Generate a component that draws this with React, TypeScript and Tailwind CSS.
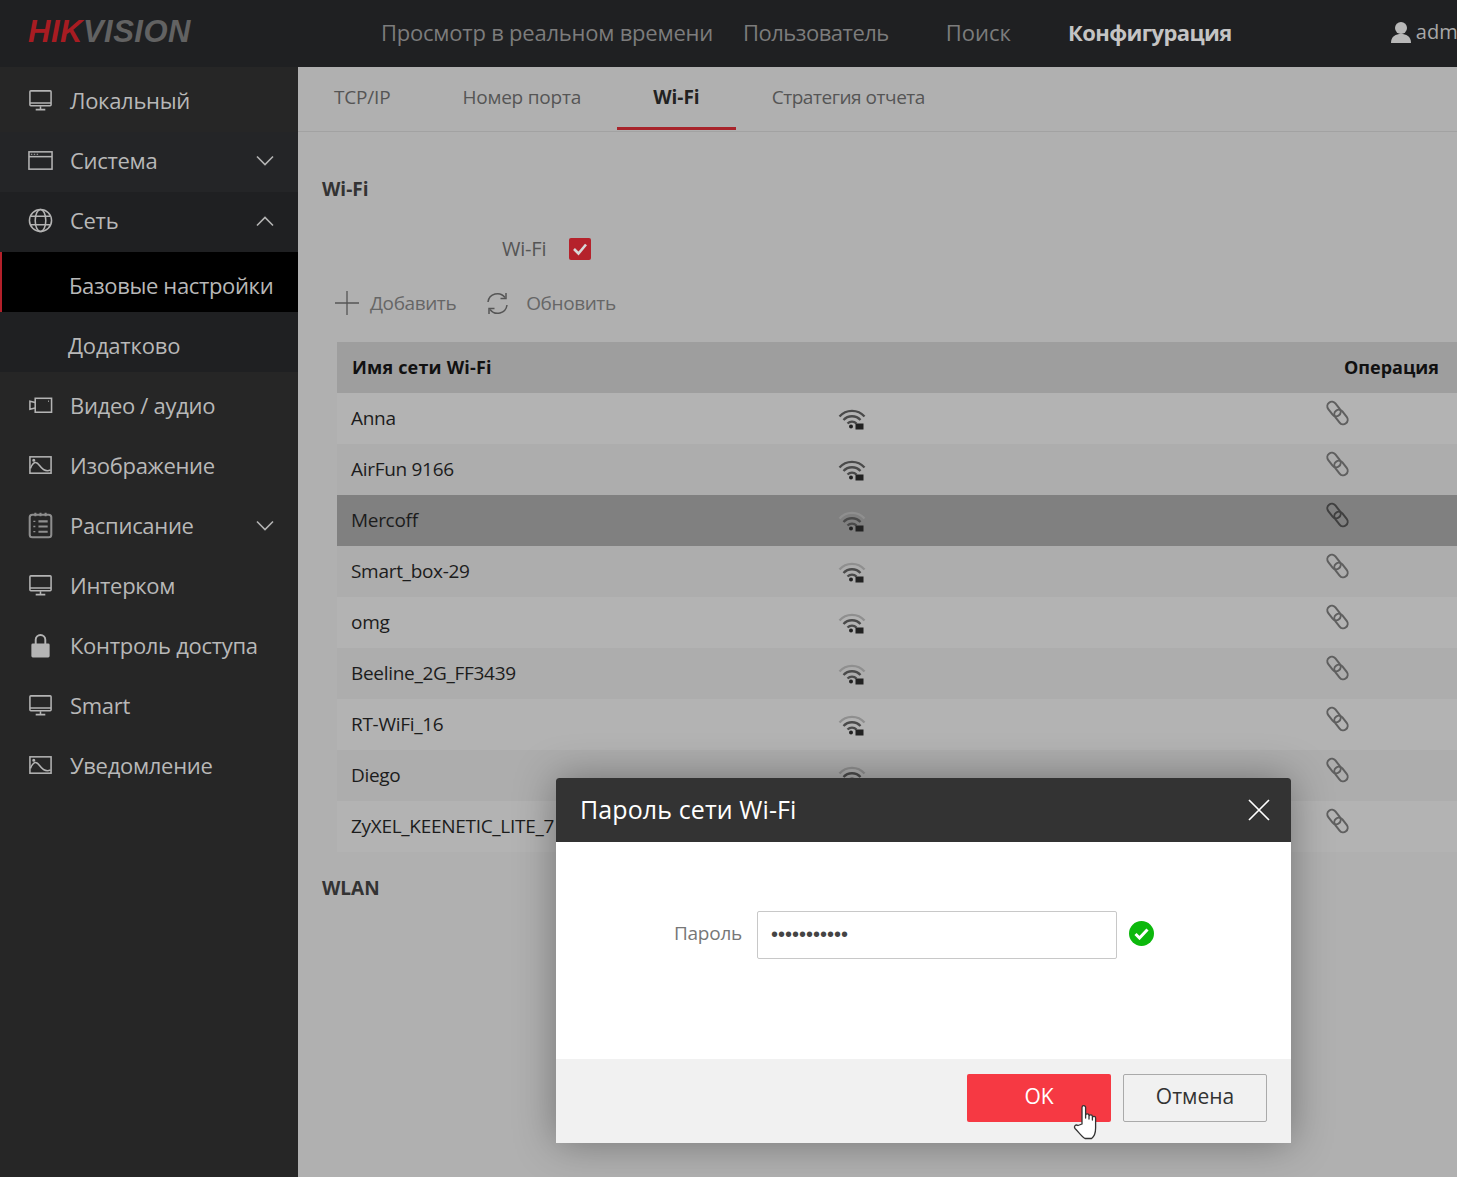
type IconProps = { className?: string };

function MonitorIcon({ className }: IconProps) {
  return (
    <svg className={className} viewBox="0 0 26 24" fill="none" stroke="currentColor" strokeWidth="1.6">
      <rect x="2" y="2" width="22" height="15.5" rx="1" />
      <path d="M2 14.5h22M13 18v3M8 21.5h10" />
    </svg>
  );
}

function WindowIcon({ className }: IconProps) {
  return (
    <svg className={className} viewBox="0 0 26 24" fill="none" stroke="currentColor" strokeWidth="1.6">
      <rect x="1" y="3" width="24" height="18" />
      <path d="M1 8h24" />
      <path d="M3 5.5h1.5M6 5.5h1.5M9 5.5h1.5" strokeWidth="1.2" />
    </svg>
  );
}

function GlobeIcon({ className }: IconProps) {
  return (
    <svg className={className} viewBox="0 0 26 26" fill="none" stroke="currentColor" strokeWidth="1.6">
      <circle cx="13" cy="13" r="11.5" />
      <ellipse cx="13" cy="13" rx="5.5" ry="11.5" />
      <path d="M2.6 8.5h20.8M2.6 17.5h20.8" />
    </svg>
  );
}

function VideoIcon({ className }: IconProps) {
  return (
    <svg className={className} viewBox="0 0 26 24" fill="none" stroke="currentColor" strokeWidth="1.6">
      <rect x="7.5" y="4.5" width="17" height="14.5" />
      <path d="M7.5 9 L2 7.5 V16 L7.5 14.5" />
      <path d="M21 7.5h.8" />
    </svg>
  );
}

function ImageIcon({ className }: IconProps) {
  return (
    <svg className={className} viewBox="0 0 26 24" fill="none" stroke="currentColor" strokeWidth="1.6">
      <rect x="2" y="3" width="22" height="17" />
      <path d="M2.5 15 C6 7 9 8 12 12 S19 19 23.5 16.5" />
      <circle cx="6" cy="6.5" r="0.8" fill="currentColor" />
    </svg>
  );
}

function ScheduleIcon({ className }: IconProps) {
  return (
    <svg className={`${className} scale-[1.15]`} viewBox="0 0 26 28" fill="none" stroke="#8e8e8e" strokeWidth="2">
      <rect x="2.5" y="3.5" width="21" height="22" rx="2.5" />
      <path d="M8 1.5v3.5M13 1.5v3.5M18 1.5v3.5" />
      <path d="M11 10h9M11 15h9M11 20h9" />
      <path d="M6 10h2M6 15h2M6 20h2" strokeWidth="1.3" />
    </svg>
  );
}

function LockIcon({ className }: IconProps) {
  return (
    <svg className={className} viewBox="0 0 26 26">
      <path d="M8 12V7a5 5 0 0 1 10 0v5" fill="none" stroke="currentColor" strokeWidth="2" />
      <rect x="3.5" y="11" width="19" height="14.5" rx="1.5" fill="currentColor" />
    </svg>
  );
}

function Chevron({ up }: { up?: boolean }) {
  return (
    <svg className="mt-[1px] w-[20px] h-[12px] text-[#b4b4b4]" viewBox="0 0 20 12" fill="none" stroke="currentColor" strokeWidth="1.6">
      <path d={up ? "M2 10.5 L10 2.5 L18 10.5" : "M2 1.5 L10 9.5 L18 1.5"} />
    </svg>
  );
}

function WifiIcon({ weak }: { weak?: boolean }) {
  return (
    <svg className="w-[28px] h-[22px]" viewBox="0 0 28 22" fill="none" stroke="#4a4a4a" strokeWidth="2.3">
      <path d="M1.5 8.5 C8 1 20 1 26.5 8.5" stroke={weak ? "#8f8f8f" : "#4a4a4a"} />
      <path d="M5.5 12 C10 7 18 7 22.5 12" />
      <path d="M9.5 15.5 C12 13 16 13 18.5 15.5" />
      <circle cx="13" cy="18.5" r="2" fill="#222" stroke="none" />
      <rect x="17.5" y="15.5" width="8" height="6" fill="#222" stroke="none" />
    </svg>
  );
}

function LinkIcon({ dark }: { dark?: boolean }) {
  return (
    <svg className={`w-[24px] h-[26px] ${dark ? "text-[#404040]" : "text-[#5f5f5f]"}`} viewBox="0 0 24 26" fill="none" stroke="currentColor" strokeWidth="2">
      <rect x="0" y="4.5" width="16" height="9" rx="4.5" transform="rotate(52 8 9)" />
      <rect x="7" y="12.5" width="16" height="9" rx="4.5" transform="rotate(52 15 17)" />
    </svg>
  );
}

function HandCursor() {
  return (
    <svg className="absolute left-[517px] top-[326px] w-[26px] h-[36px]" viewBox="0 0 26 36" fill="#fff" stroke="#333" strokeWidth="1.3" strokeLinejoin="round">
      <path d="M9 20 V3.5 a1.8 1.8 0 0 1 3.6 0 V14 V11.5 a1.7 1.7 0 0 1 3.4 0 V15 V12.5 a1.7 1.7 0 0 1 3.4 0 V16 V14 a1.6 1.6 0 0 1 3.2 0 V24 c0 5 -2 9 -4 10.5 H12 C9 33 5.5 28 2 24.5 C0.5 22.5 2.5 20 5 21.5 Z" />
    </svg>
  );
}

type MenuItem = { label: string; icon: (p: IconProps) => React.ReactNode; chevron?: string; bg?: string };

const menuTop: MenuItem[] = [
  { label: "Локальный", icon: MonitorIcon, bg: "bg-[#262626]" },
  { label: "Система", icon: WindowIcon, chevron: "down", bg: "bg-[#242527]" },
  { label: "Сеть", icon: GlobeIcon, chevron: "up", bg: "bg-[#1f2022]" },
];

const menuBottom: MenuItem[] = [
  { label: "Видео / аудио", icon: VideoIcon },
  { label: "Изображение", icon: ImageIcon },
  { label: "Расписание", icon: ScheduleIcon, chevron: "down" },
  { label: "Интерком", icon: MonitorIcon },
  { label: "Контроль доступа", icon: LockIcon },
  { label: "Smart", icon: MonitorIcon },
  { label: "Уведомление", icon: ImageIcon },
];

function MenuRow({ item, offset }: { item: MenuItem; offset: string }) {
  const Icon = item.icon;
  return (
    <div className={`h-[60px] flex items-center pl-[28px] pr-[23px] ${offset} ${item.bg ?? ""}`}>
      <Icon className="w-[25px] h-[25px] text-[#b4b4b4]" />
      <span className="ml-[17px] flex-1 text-[22px] tracking-[-0.3px]">{item.label}</span>
      {item.chevron && <Chevron up={item.chevron === "up"} />}
    </div>
  );
}

const networks = [
  { name: "Anna" },
  { name: "AirFun 9166" },
  { name: "Mercoff", weak: true, active: true },
  { name: "Smart_box-29", weak: true },
  { name: "omg", weak: true },
  { name: "Beeline_2G_FF3439", weak: true },
  { name: "RT-WiFi_16", weak: true },
  { name: "Diego", weak: true },
  { name: "ZyXEL_KEENETIC_LITE_7", weak: true },
];

function App() {
  return (
    <div className="relative w-[1457px] h-[1177px] overflow-hidden bg-[#b0b0b0] font-['Open_Sans','Noto_Sans',sans-serif]">
      <header className="h-[67px] bg-[#1f2022] flex items-center">
        <div className="w-[351px] shrink-0 pl-[28px] font-['Liberation_Sans',sans-serif] italic font-bold text-[31px] tracking-[0.5px] pb-[2px]">
          <span className="text-[#a81c22]">HIK</span>
          <span className="text-[#626262]">VISION</span>
        </div>
        <nav className="flex shrink-0 items-center text-[22px] text-[#7c7c7c] whitespace-nowrap pb-[2px]">
          <span className="ml-[30px] tracking-[-0.22px]">Просмотр в реальном времени</span>
          <span className="ml-[30px] tracking-[-0.5px]">Пользователь</span>
          <span className="ml-[57px]">Поиск</span>
          <span className="ml-[57px] font-bold text-[#c4c4c4] tracking-[-0.6px]">Конфигурация</span>
        </nav>
        <div className="ml-[158px] shrink-0 flex items-center text-[#a8a8a8] text-[20px] whitespace-nowrap pb-[4px]">
          <svg className="w-[22px] h-[22px] mr-[4px]" viewBox="0 0 22 22" fill="#b8b8b8">
            <circle cx="11" cy="7" r="6" />
            <path d="M1 22 C1 15 6 13 11 13 S21 15 21 22 Z" />
          </svg>
          admin
        </div>
      </header>

      <div className="flex h-[1110px]">
        <aside className="w-[298px] shrink-0 bg-[#262626] text-[#b8b8b8] pt-[5px]">
          {menuTop.map((item) => (
            <MenuRow key={item.label} item={item} offset="pb-[4px]" />
          ))}
          <div className="h-[60px] bg-black border-l-2 border-[#b3202a] flex items-center pl-[67px] pt-[7px] text-[22px] tracking-[-0.35px]">
            Базовые настройки
          </div>
          <div className="h-[60px] bg-[#1f2022] flex items-center pl-[68px] pt-[7px] text-[22px] tracking-[-0.2px]">Додатково</div>
          {menuBottom.map((item) => (
            <MenuRow key={item.label} item={item} offset="pt-[6px]" />
          ))}
        </aside>

        <main className="flex-1 min-w-0">
          <div className="h-[65px] flex border-b border-[#a2a2a2] text-[19px] text-[#555] tracking-[-0.2px]">
            <div className="px-9 flex items-center pb-[3px]">TCP/IP</div>
            <div className="px-9 flex items-center pb-[3px]">Номер порта</div>
            <div className="px-9 flex items-center mb-[1px] font-bold text-[#222] tracking-normal border-b-[3px] border-[#a8242b]">Wi-Fi</div>
            <div className="px-9 flex items-center pb-[3px] tracking-[-0.45px]">Стратегия отчета</div>
          </div>

          <div className="pl-[24px]">
            <h2 className="mt-[43px] h-[28px] leading-[28px] text-[19px] font-bold text-[#333]">Wi-Fi</h2>

            <div className="mt-[34px] h-[24px] flex items-center pl-[180px]">
              <span className="text-[20px] tracking-[-0.2px] text-[#555]">Wi-Fi</span>
              <span className="ml-[23px] w-[22px] h-[22px] rounded-[2px] bg-[#b5222b] flex items-center justify-center">
                <svg className="w-[16px] h-[14px]" viewBox="0 0 16 14" fill="none" stroke="#d8d8d8" strokeWidth="2.6">
                  <path d="M2 7 L6.5 11.5 L14 2.5" />
                </svg>
              </span>
            </div>

            <div className="mt-[27px] h-[30px] flex items-center text-[19px] text-[#666] tracking-[-0.4px]">
              <svg className="ml-[13px] w-[24px] h-[24px]" viewBox="0 0 24 24" stroke="#555" strokeWidth="1.3">
                <path d="M0 12h24M12 0v24" />
              </svg>
              <span className="ml-[11px]">Добавить</span>
              <svg className="ml-[29px] w-[25px] h-[25px]" viewBox="0 0 25 25" fill="none" stroke="#555" strokeWidth="1.5">
                <path d="M3 11 A9.5 9.5 0 0 1 20 6.5" />
                <path d="M21 2 V7.5 H15.5" />
                <path d="M22 14 A9.5 9.5 0 0 1 5 18.5" />
                <path d="M4 23 V17.5 H9.5" />
              </svg>
              <span className="ml-[16px]">Обновить</span>
            </div>

            <div className="mt-[24px] ml-[15px]">
              <div className="h-[51px] bg-[#9e9e9e] grid grid-cols-[501px_489px_1fr] items-center text-[18px] font-bold text-[#111] whitespace-nowrap">
                <span className="pl-[15px] tracking-[0.2px]">Имя сети Wi-Fi</span>
                <span />
                <span className="pl-[17px]">Операция</span>
              </div>
              {networks.map((net, i) => (
                <div
                  key={net.name}
                  className={`h-[51px] grid grid-cols-[501px_489px_1fr] items-center text-[19px] tracking-[-0.3px] text-[#1c1c1c] whitespace-nowrap ${
                    net.active ? "bg-[#808080]" : i % 2 === 0 ? "bg-[#b3b3b3]" : "bg-[#adadad]"
                  }`}
                >
                  <span className="pl-[14px]">{net.name}</span>
                  <WifiIcon weak={net.weak} />
                  <span className="-mt-[11px] -ml-[1px]">
                    <LinkIcon dark={net.active} />
                  </span>
                </div>
              ))}
            </div>

            <h2 className="mt-[22px] h-[28px] leading-[28px] text-[19px] font-bold text-[#333]">WLAN</h2>
          </div>
        </main>
      </div>

      <div className="absolute left-[556px] top-[778px] w-[735px] h-[365px] flex flex-col rounded-t-[3px] bg-white shadow-[0_0_40px_rgba(0,0,0,0.35)]">
        <div className="h-[64px] rounded-t-[3px] bg-[#333] flex items-center justify-between pl-[24px] pr-[20px]">
          <span className="text-[25px] tracking-[0.1px] text-white">Пароль сети Wi-Fi</span>
          <svg className="w-[24px] h-[24px]" viewBox="0 0 24 24" stroke="#fff" strokeWidth="1.7">
            <path d="M2 2 L22 22 M22 2 L2 22" />
          </svg>
        </div>
        <div className="flex-1 flex pt-[69px] items-start">
          <span className="w-[186px] h-[48px] flex items-center justify-end pb-[3px] text-[19px] tracking-[-0.25px] text-[#777]">Пароль</span>
          <div className="ml-[15px] w-[360px] h-[48px] pb-[2px] rounded-[2px] border border-[#c8c8c8] flex items-center pl-[13px] text-[#444] text-[20px] font-['Liberation_Sans',sans-serif]">
            •••••••••••
          </div>
          <span className="ml-[12px] mt-[10px] w-[25px] h-[25px] rounded-full bg-[#0cb80c] flex items-center justify-center">
            <svg className="w-[15px] h-[12px]" viewBox="0 0 15 12" fill="none" stroke="#fff" strokeWidth="3">
              <path d="M1.5 6 L5.5 10 L13.5 1.5" />
            </svg>
          </span>
        </div>
        <div className="h-[84px] bg-[#f1f1f1] flex items-start justify-end gap-[12px] pt-[15px] pr-[24px]">
          <button className="w-[144px] h-[48px] pb-[2px] rounded-[2px] bg-[#f63943] text-white text-[21px]">OK</button>
          <button className="w-[144px] h-[48px] pb-[2px] rounded-[2px] border border-[#aaa] text-[#333] text-[21px]">Отмена</button>
        </div>
        <HandCursor />
      </div>
    </div>
  );
}

export default App;
